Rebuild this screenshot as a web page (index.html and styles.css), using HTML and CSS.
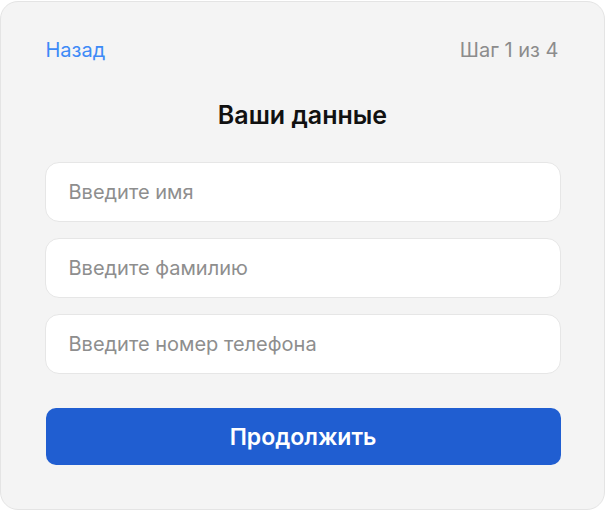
FILE: index.html
```html
<!DOCTYPE html>
<html lang="ru">
<head>
<meta charset="utf-8">
<link rel="stylesheet" href="styles.css">
</head>
<body>
<div class="card">
  <div class="header">
    <a class="back" href="#">Назад</a>
    <span class="step">Шаг 1 из 4</span>
  </div>
  <h1 class="title">Ваши данные</h1>
  <form class="form">
    <input class="field" type="text" placeholder="Введите имя">
    <input class="field" type="text" placeholder="Введите фамилию">
    <input class="field" type="tel" placeholder="Введите номер телефона">
    <button class="submit" type="button">Продолжить</button>
  </form>
</div>
</body>
</html>
```
FILE: styles.css
```css
html, body {
  margin: 0;
  padding: 0;
  background: #ffffff;
}
body {
  font-family: Inter, "Noto Sans", sans-serif;
  padding: 1px 0 0 0;
}
.card {
  box-sizing: border-box;
  width: 605px;
  height: 509px;
  background: #f4f4f4;
  border: 1.5px solid #e4e4e4;
  border-radius: 18px;
  padding: 36px 43.5px 0 43.5px;
}
.header {
  display: flex;
  justify-content: space-between;
  align-items: center;
  font-size: 20px;
  line-height: 24px;
  padding: 0 2px 0 1px;
}
.back {
  color: #3d8af7;
  text-decoration: none;
}
.step {
  color: #8c8c8c;
}
.title {
  margin: 39px 0 0 0;
  text-align: center;
  font-size: 25px;
  line-height: 28px;
  font-weight: 600;
  color: #111111;
}
.form {
  margin-top: 33px;
  display: flex;
  flex-direction: column;
  gap: 16px;
}
.field {
  box-sizing: border-box;
  height: 60px;
  width: 100%;
  border: 1px solid #e6e6e6;
  border-radius: 14px;
  background: #ffffff;
  padding: 0 23px;
  font-family: inherit;
  font-size: 20px;
  color: #222;
  outline: none;
}
.field::placeholder {
  color: #8e8e8e;
}
.submit {
  margin: 18px 0 0 1px;
  height: 57px;
  width: calc(100% - 1px);
  border: none;
  border-radius: 10px;
  background: #205ed1;
  color: #ffffff;
  font-family: inherit;
  font-size: 23px;
  font-weight: 600;
}
```
